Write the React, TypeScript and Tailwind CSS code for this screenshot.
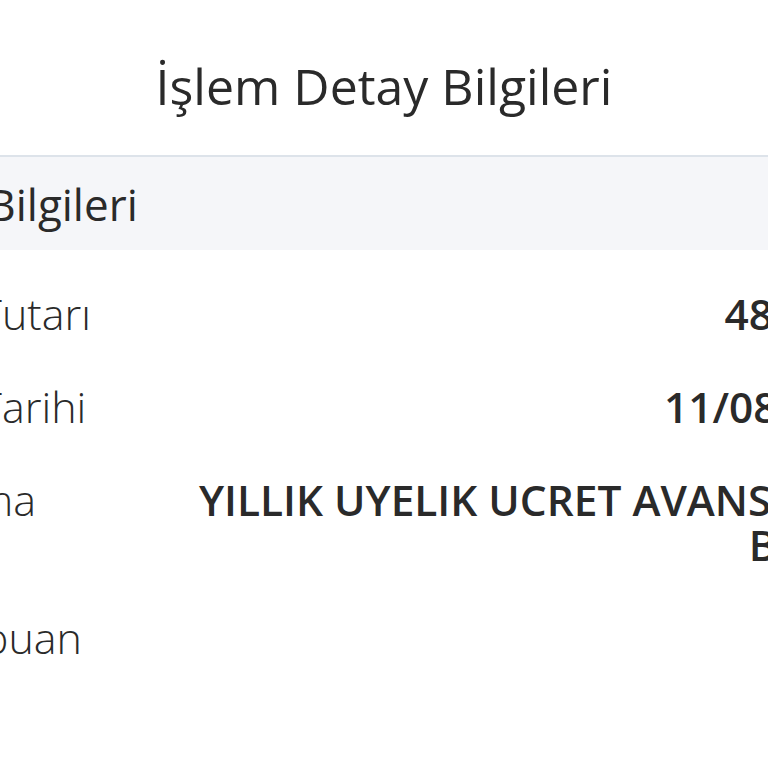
export default function App() {
  const rows = [
    { label: "İşlem Tutarı", value: "48,00 TL" },
    { label: "İşlem Tarihi", value: "11/08/2023" },
    { label: "Açıklama", value: "YILLIK UYELIK UCRET AVANSI IADE BEDELI" },
    { label: "Kalan puan", value: "" },
  ];

  return (
    <div
      className="w-[768px] h-[768px] overflow-hidden bg-white text-[#2a2a2a]"
      style={{ fontFamily: '"Open Sans", "Noto Sans", sans-serif' }}
    >
      <h1 className="pt-[61px] text-center text-[50px] leading-none font-normal">İşlem Detay Bilgileri</h1>

      <div className="mt-[44px] w-[1073px] -ml-[158px]">
        <div className="flex h-[95px] items-center border-t-2 border-[#dde3ea] bg-[#f5f6f9] px-6 text-[44px]">
          İşlem Bilgileri
        </div>

        <dl className="mt-[17px]">
          {rows.map((r) => (
            <div key={r.label} className="flex items-start justify-between gap-8 px-6 py-6 leading-[45px]">
              <dt className="shrink-0 text-[43px] font-light">{r.label}</dt>
              <dd className="max-w-[700px] text-right text-[42.4px] font-semibold">{r.value}</dd>
            </div>
          ))}
        </dl>
      </div>
    </div>
  );
}
